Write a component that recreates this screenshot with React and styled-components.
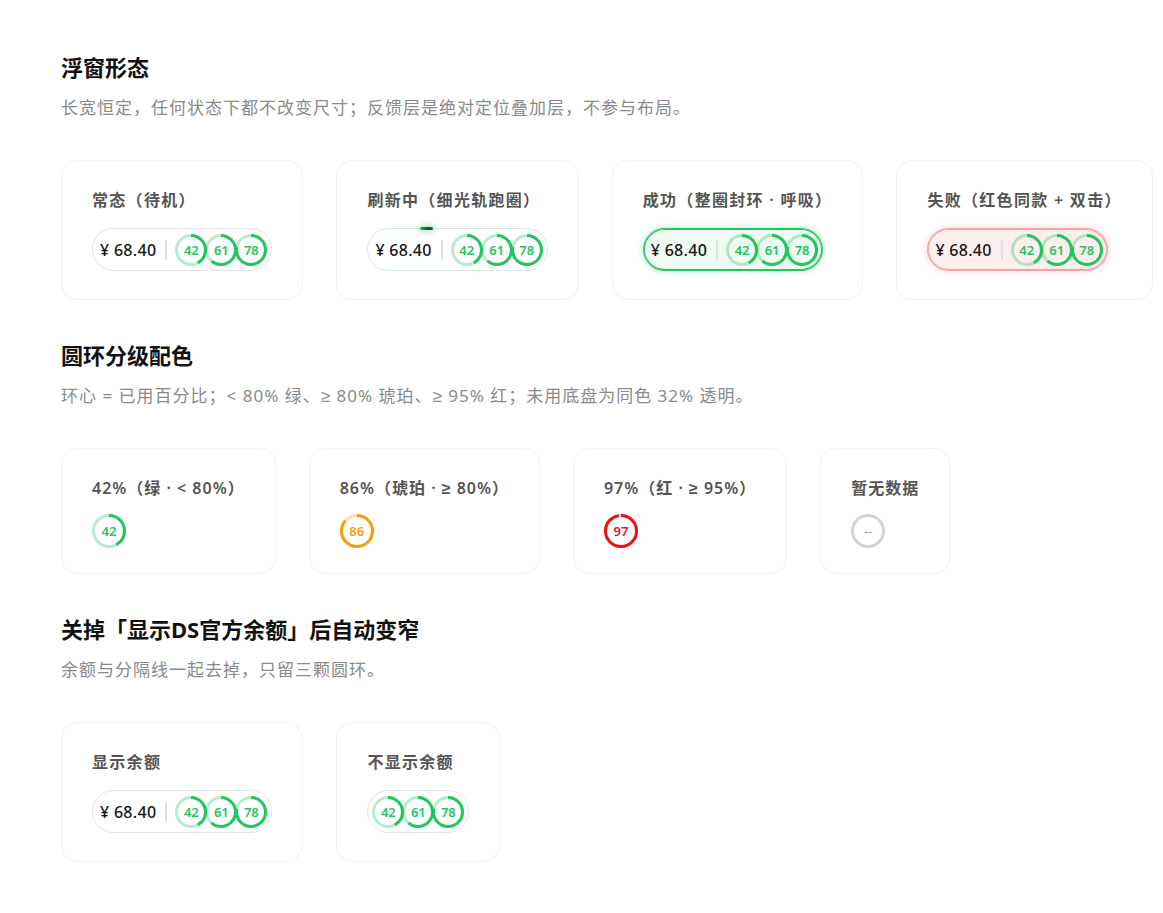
import styled, { createGlobalStyle, css } from "styled-components";

const GREEN = "#22c55e";
const AMBER = "#f59e0b";
const RED = "#e5141b";
const GREY = "#d4d4d4";

const GlobalStyle = createGlobalStyle`
  body {
    margin: 0;
    background: #ffffff;
    font-family: "Noto Sans", "Liberation Sans", "Noto Sans CJK SC", sans-serif;
    color: #111;
  }
`;

const levelColor = (pct) => {
  if (pct == null) return GREY;
  if (pct >= 95) return RED;
  if (pct >= 80) return AMBER;
  return GREEN;
};

const Ring = ({ pct, size = 32 }) => {
  const color = levelColor(pct);
  const stroke = 3;
  const r = (size - stroke) / 2;
  const c = 2 * Math.PI * r;
  const used = pct == null ? 0 : (c * pct) / 100;
  return (
    <RingBox $size={size}>
      <svg width={size} height={size} viewBox={`0 0 ${size} ${size}`}>
        <circle
          cx={size / 2}
          cy={size / 2}
          r={r}
          fill="none"
          stroke={color}
          strokeOpacity={pct == null ? 1 : 0.32}
          strokeWidth={stroke}
        />
        {pct != null && (
          <circle
            cx={size / 2}
            cy={size / 2}
            r={r}
            fill="none"
            stroke={color}
            strokeWidth={stroke}
            strokeDasharray={`${used} ${c}`}
            transform={`rotate(-90 ${size / 2} ${size / 2})`}
          />
        )}
      </svg>
      <RingLabel $color={pct == null ? "#999" : color} $empty={pct == null}>
        {pct == null ? "--" : pct}
      </RingLabel>
    </RingBox>
  );
};

const Widget = ({ state = "idle", balance = true }) => (
  <Pill $state={state} $balance={balance}>
    {state === "refresh" && <Comet />}
    {balance && (
      <>
        <Money>¥ 68.40</Money>
        <Divider />
      </>
    )}
    <Rings>
      <Ring pct={42} />
      <Ring pct={61} />
      <Ring pct={78} />
    </Rings>
  </Pill>
);

const App = () => (
  <>
    <GlobalStyle />
    <Page>
      <Section>
        <Heading>浮窗形态</Heading>
        <Desc>长宽恒定，任何状态下都不改变尺寸；反馈层是绝对定位叠加层，不参与布局。</Desc>
        <CardRow>
          <Card>
            <CardTitle>常态（待机）</CardTitle>
            <Widget state="idle" />
          </Card>
          <Card>
            <CardTitle>刷新中（细光轨跑圈）</CardTitle>
            <Widget state="refresh" />
          </Card>
          <Card>
            <CardTitle>成功（整圈封环 · 呼吸）</CardTitle>
            <Widget state="ok" />
          </Card>
          <Card>
            <CardTitle>失败（红色同款 + 双击）</CardTitle>
            <Widget state="fail" />
          </Card>
        </CardRow>
      </Section>

      <Section>
        <Heading>圆环分级配色</Heading>
        <Desc>环心 = 已用百分比；&lt; 80% 绿、≥ 80% 琥珀、≥ 95% 红；未用底盘为同色 32% 透明。</Desc>
        <CardRow>
          <Card $short>
            <CardTitle $tight>42%（绿 · &lt; 80%）</CardTitle>
            <Ring pct={42} size={34} />
          </Card>
          <Card $short>
            <CardTitle $tight>86%（琥珀 · ≥ 80%）</CardTitle>
            <Ring pct={86} size={34} />
          </Card>
          <Card $short>
            <CardTitle $tight>97%（红 · ≥ 95%）</CardTitle>
            <Ring pct={97} size={34} />
          </Card>
          <Card $short>
            <CardTitle $tight>暂无数据</CardTitle>
            <Ring pct={null} size={34} />
          </Card>
        </CardRow>
      </Section>

      <Section>
        <Heading>关掉「显示DS官方余额」后自动变窄</Heading>
        <Desc>余额与分隔线一起去掉，只留三颗圆环。</Desc>
        <CardRow>
          <Card>
            <CardTitle>显示余额</CardTitle>
            <Widget />
          </Card>
          <Card>
            <CardTitle>不显示余额</CardTitle>
            <Widget balance={false} />
          </Card>
        </CardRow>
      </Section>
    </Page>
  </>
);

export default App;

const Page = styled.div`
  padding: 52px 0 40px 61px;
  display: flex;
  flex-direction: column;
  gap: 40px;
`;

const Section = styled.section`
  display: flex;
  flex-direction: column;
`;

const Heading = styled.h2`
  margin: 0;
  font-size: 22px;
  line-height: 30px;
  font-weight: 700;
  color: #111;
`;

const Desc = styled.p`
  margin: 14px 0 40px;
  font-size: 17px;
  line-height: 24px;
  letter-spacing: 1px;
  color: #8a8a8a;
`;

const CardRow = styled.div`
  display: flex;
  gap: 33px;
  align-items: flex-start;
`;

const Card = styled.div`
  display: inline-flex;
  flex-direction: column;
  align-items: flex-start;
  gap: ${(p) => (p.$short ? "16px" : "18px")};
  padding: 29px 30px ${(p) => (p.$short ? "25px" : "28px")};
  border: 1px solid #f0f0f0;
  border-radius: 16px;
  background: #fff;
`;

const CardTitle = styled.div`
  font-size: 16px;
  line-height: 20px;
  font-weight: 600;
  letter-spacing: ${(p) => (p.$tight ? "1px" : "1.3px")};
  color: #555;
  white-space: nowrap;
`;

const pillStates = {
  idle: css`
    border-color: #e4e4e4;
    background: #fff;
  `,
  refresh: css`
    border-color: #d3ebdb;
    background: #fff;
  `,
  ok: css`
    border-color: ${GREEN};
    background: #effaf2;
    box-shadow: inset 0 0 0 1px ${GREEN}, 0 0 6px rgba(34, 197, 94, 0.35);
  `,
  fail: css`
    border-color: #f2a3a3;
    background: #fdeeee;
    box-shadow: inset 0 0 0 1px #f2a3a3, 0 0 6px rgba(239, 68, 68, 0.25);
  `,
};

const Pill = styled.div`
  position: relative;
  box-sizing: border-box;
  height: 43px;
  display: inline-flex;
  align-items: center;
  padding: ${(p) => (p.$balance ? "0 4px 0 7px" : "0 4px 0 4px")};
  border: 1px solid #e4e4e4;
  border-radius: 999px;
  ${(p) => pillStates[p.$state]}
`;

const Comet = styled.span`
  position: absolute;
  top: -2px;
  left: 52px;
  width: 13px;
  height: 3px;
  border-radius: 2px;
  background: linear-gradient(90deg, #3aa860, #14532d 60%, #166534);
  box-shadow: 0 0 5px 2px rgba(34, 197, 94, 0.35);
`;

const Money = styled.span`
  font-size: 16px;
  font-weight: 500;
  letter-spacing: 0.3px;
  color: #161616;
  white-space: nowrap;
`;

const Divider = styled.span`
  width: 2px;
  height: 20px;
  margin: 0 8px 0 9px;
  background: #e2e2e2;
`;

const Rings = styled.div`
  display: flex;
  align-items: center;
  & > * + * {
    margin-left: -2px;
  }
`;

const RingBox = styled.div`
  position: relative;
  width: ${(p) => p.$size}px;
  height: ${(p) => p.$size}px;
  flex: none;
  svg {
    display: block;
  }
`;

const RingLabel = styled.span`
  position: absolute;
  inset: 0;
  display: flex;
  align-items: center;
  justify-content: center;
  font-size: 13px;
  font-weight: ${(p) => (p.$empty ? 400 : 600)};
  color: ${(p) => p.$color};
`;
